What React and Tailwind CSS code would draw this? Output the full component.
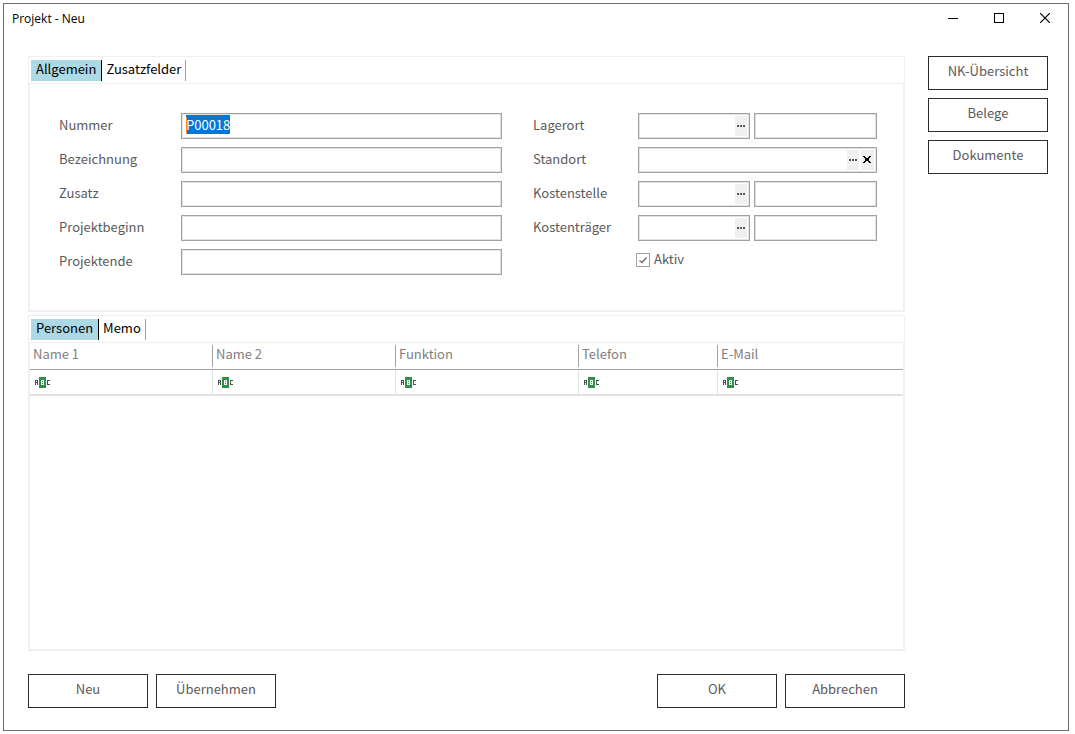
import { useEffect, useRef } from "react";

const box =
  "flex h-[26px] min-w-0 items-center border border-[#a0a0a0] bg-white shadow-[inset_0_0_0_1px_#e3e3e3]";
const inputText = "h-full w-full min-w-0 bg-transparent px-1 outline-none";
const labelText = "shrink-0 pb-[2px]";

function MoreButton({ label }) {
  return (
    <button type="button" aria-label={label} className="flex h-5 w-3 shrink-0 items-center justify-center bg-[#f0f0f0]">
      <svg width="8" height="2" viewBox="0 0 8 2" fill="#555" shapeRendering="crispEdges">
        <rect x="0" width="2" height="2" />
        <rect x="3" width="2" height="2" />
        <rect x="6" width="2" height="2" />
      </svg>
    </button>
  );
}

function TextRow({ id, label, children }) {
  return (
    <div className="flex h-[26px] items-center">
      <label htmlFor={id} className={labelText + " w-[122px]"}>{label}</label>
      <div className={box + " relative flex-1"}>
        {children || <input id={id} type="text" className={inputText} />}
      </div>
    </div>
  );
}

function LookupRow({ id, label }) {
  return (
    <div className="flex h-[26px] items-center">
      <label htmlFor={id} className={labelText + " w-[105px]"}>{label}</label>
      <div className="grid flex-1 grid-cols-[112fr_123fr] gap-1">
        <div className={box + " pr-[2px]"}>
          <input id={id} type="text" className={inputText} />
          <MoreButton label={label + " suchen"} />
        </div>
        <input type="text" readOnly aria-label={label + " Bezeichnung"} className={box + " w-full px-1 outline-none"} />
      </div>
    </div>
  );
}

function Tabs({ items }) {
  return (
    <div role="tablist" className="flex h-7 items-start border border-[#f0f0f0] px-[2px] pt-[3px] text-black">
      {items.map((item, i) => (
        <button
          key={item}
          type="button"
          role="tab"
          aria-selected={i === 0}
          className={
            i === 0
              ? "h-[21px] border-r border-black bg-[#add8e6] px-[5px] pb-[3px] leading-[18px]"
              : "h-[21px] border-r border-[#a0a0a0] px-1 pb-[3px] leading-[18px]"
          }
        >
          {item}
        </button>
      ))}
    </div>
  );
}

function ActionButton({ children }) {
  return (
    <button type="button" className="h-[34px] w-[120px] border border-[#2b2b2b] bg-white pb-[5px]">
      {children}
    </button>
  );
}

function AbcIcon() {
  return (
    <svg width="16" height="11" viewBox="0 0 16 11" shapeRendering="crispEdges" aria-hidden="true">
      <path d="M4 0h7v11h-7z" fill="#2f9148" />
      <path d="M0 3h3v5h-1v-2h-1v2h-1zM1 4v1h1v-1z" fill="#505050" fillRule="evenodd" />
      <path d="M6 3h3v5h-3zM7 4v1h1v-1zM7 6v1h1v-1z" fill="#fff" fillRule="evenodd" />
      <path d="M12 3h3v1h-2v3h2v1h-3z" fill="#505050" />
    </svg>
  );
}

const columns = [
  ["Name 1", "w-[183px]"],
  ["Name 2", "w-[183px]"],
  ["Funktion", "w-[183px]"],
  ["Telefon", "w-[139px]"],
  ["E-Mail", ""],
];

export default function App() {
  const numberRef = useRef(null);
  useEffect(() => {
    numberRef.current.focus();
    numberRef.current.select();
  }, []);

  return (
    <div className="flex min-h-screen bg-white py-[3px] pr-[6px] pl-[3px] font-['Noto_Sans_CJK_SC',sans-serif] text-[13px] leading-5 text-[#5a5a5a]">
      <div className="flex flex-1 flex-col border border-[#707070]">
        <header className="flex h-7 items-center justify-between">
          <h1 className="pt-[2px] pl-2 font-['Open_Sans',sans-serif] text-xs text-black">Projekt - Neu</h1>
          <div className="flex h-full">
            <button type="button" aria-label="Minimieren" className="flex w-[46px] items-center justify-center">
              <svg width="10" height="10" viewBox="0 0 10 10" shapeRendering="crispEdges"><path d="M0 5.5h10" stroke="#000" /></svg>
            </button>
            <button type="button" aria-label="Maximieren" className="flex w-[46px] items-center justify-center">
              <svg width="10" height="10" viewBox="0 0 10 10" shapeRendering="crispEdges"><path d="M.5.5h9v9h-9z" fill="none" stroke="#000" /></svg>
            </button>
            <button type="button" aria-label="Schließen" className="flex w-[46px] items-center justify-center">
              <svg width="10" height="10" viewBox="0 0 10 10"><path d="M0 0L10 10M10 0L0 10" stroke="#000" strokeWidth="1.200" /></svg>
            </button>
          </div>
        </header>

        <div className="flex flex-1 gap-[23px] pt-6 pr-5 pb-[22px] pl-6">
          <main className="flex min-w-0 flex-1 flex-col">
            <section>
              <Tabs items={["Allgemein", "Zusatzfelder"]} />
              <div className="grid grid-cols-[443fr_344fr] gap-[31px] border-x-2 border-b-2 border-[#f0f0f0] pt-[29px] pr-[26px] pb-[35px] pl-[29px]">
                <div className="flex flex-col gap-2">
                  <TextRow id="nummer" label="Nummer">
                    <input
                      id="nummer"
                      ref={numberRef}
                      type="text"
                      defaultValue="P00018"
                      className={inputText + " pb-1 selection:bg-[#0078d7] selection:text-white"}
                    />
                    <span className="absolute top-[3px] left-1 h-[17px] w-px bg-[#ff8728]" />
                  </TextRow>
                  <TextRow id="bezeichnung" label="Bezeichnung" />
                  <TextRow id="zusatz" label="Zusatz" />
                  <TextRow id="beginn" label="Projektbeginn" />
                  <TextRow id="ende" label="Projektende" />
                </div>
                <div className="flex flex-col gap-2">
                  <LookupRow id="lagerort" label="Lagerort" />
                  <div className="flex h-[26px] items-center">
                    <label htmlFor="standort" className={labelText + " w-[105px]"}>Standort</label>
                    <div className={box + " flex-1 gap-[2px] pr-[2px]"}>
                      <input id="standort" type="text" className={inputText} />
                      <MoreButton label="Standort suchen" />
                      <button type="button" aria-label="Standort leeren" className="flex h-5 w-[13px] shrink-0 items-center justify-start bg-[#f0f0f0] pb-px pl-[2px]">
                        <svg width="8" height="7" viewBox="0 0 8 7" shapeRendering="crispEdges">
                          <path d="M0 0h2v1h-2zM6 0h2v1h-2zM1 1h2v1h-2zM5 1h2v1h-2zM2 2h4v1h-4zM2 3h4v1h-4zM2 4h4v1h-4zM1 5h2v1h-2zM5 5h2v1h-2zM0 6h2v1h-2zM6 6h2v1h-2z" />
                        </svg>
                      </button>
                    </div>
                  </div>
                  <LookupRow id="kostenstelle" label="Kostenstelle" />
                  <LookupRow id="kostentraeger" label="Kostenträger" />
                  <div className="flex h-[22px] items-center gap-1 pl-[103px]">
                    <span className="relative flex h-[14px] w-[14px]">
                      <input id="aktiv" type="checkbox" defaultChecked className="peer h-[14px] w-[14px] appearance-none border border-[#a0a0a0] bg-white" />
                      <svg className="pointer-events-none absolute inset-0 hidden peer-checked:block" width="14" height="14" viewBox="0 0 14 14">
                        <path d="M3.500 7.500L6 9.500L10.500 4.500" fill="none" stroke="#707070" strokeWidth="1.500" />
                      </svg>
                    </span>
                    <label htmlFor="aktiv" className={labelText}>Aktiv</label>
                  </div>
                </div>
              </div>
            </section>

            <section className="mt-[3px] flex flex-1 flex-col">
              <Tabs items={["Personen", "Memo"]} />
              <div className="flex-1 border-x-2 border-b-2 border-[#f0f0f0]">
                <table className="w-full table-fixed border-separate border-spacing-0 text-left text-[#808080]">
                  <thead>
                    <tr>
                      {columns.map(([name, width], i) => (
                        <th key={name} scope="col" className={width + " border-b border-[#a0a0a0] p-0 pt-[2px] pb-[2px] font-normal"}>
                          <div className={"h-[22px] pl-[3px] leading-[18px] " + (i < 4 ? "border-r border-[#a0a0a0]" : "")}>{name}</div>
                        </th>
                      ))}
                    </tr>
                  </thead>
                  <tbody>
                    <tr>
                      {columns.map(([name], i) => (
                        <td key={name} className="border-b-2 border-[#e1e1e1] p-0">
                          <div className={"flex h-6 items-center pt-px pl-[5px] " + (i < 4 ? "border-r border-[#e1e1e1]" : "")}>
                            <AbcIcon />
                          </div>
                        </td>
                      ))}
                    </tr>
                  </tbody>
                </table>
              </div>
            </section>

            <footer className="mt-[23px] flex justify-between">
              <div className="flex gap-2">
                <ActionButton>Neu</ActionButton>
                <ActionButton>Übernehmen</ActionButton>
              </div>
              <div className="flex gap-2">
                <ActionButton>OK</ActionButton>
                <ActionButton>Abbrechen</ActionButton>
              </div>
            </footer>
          </main>

          <aside className="flex flex-col gap-2">
            <ActionButton>NK-Übersicht</ActionButton>
            <ActionButton>Belege</ActionButton>
            <ActionButton>Dokumente</ActionButton>
          </aside>
        </div>
      </div>
    </div>
  );
}
